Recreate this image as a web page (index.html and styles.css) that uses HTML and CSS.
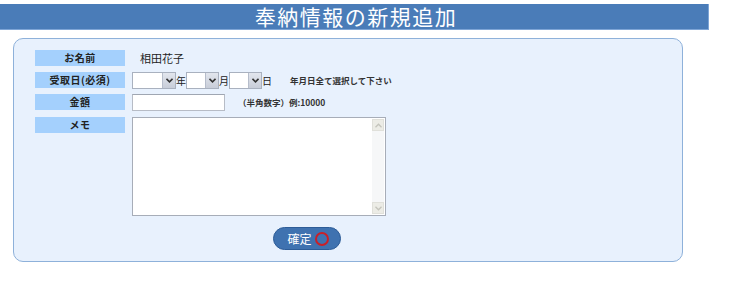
FILE: index.html
```html
<!DOCTYPE html>
<html lang="ja">
<head>
<meta charset="utf-8">
<title>奉納情報の新規追加</title>
<link rel="stylesheet" href="styles.css">
</head>
<body>
<h1 class="title-bar">奉納情報の新規追加</h1>
<form class="panel">
  <div class="row">
    <div class="label">お名前</div>
    <div class="value name">相田花子</div>
  </div>
  <div class="row">
    <div class="label">受取日(必須)</div>
    <div class="value">
      <span class="sel sel-y"><select></select><span class="arrow"><svg width="7" height="5" viewBox="0 0 7 5"><path d="M0.5 0.8 L3.5 3.8 L6.5 0.8" fill="none" stroke="#333" stroke-width="1.6"/></svg></span></span>
      <span class="unit">年</span>
      <span class="sel sel-md"><select></select><span class="arrow"><svg width="7" height="5" viewBox="0 0 7 5"><path d="M0.5 0.8 L3.5 3.8 L6.5 0.8" fill="none" stroke="#333" stroke-width="1.6"/></svg></span></span>
      <span class="unit">月</span>
      <span class="sel sel-md"><select></select><span class="arrow"><svg width="7" height="5" viewBox="0 0 7 5"><path d="M0.5 0.8 L3.5 3.8 L6.5 0.8" fill="none" stroke="#333" stroke-width="1.6"/></svg></span></span>
      <span class="unit">日</span>
      <span class="note note-date">年月日全て選択して下さい</span>
    </div>
  </div>
  <div class="row">
    <div class="label">金額</div>
    <div class="value">
      <input type="text" class="amount">
      <span class="note note-amount">（半角数字）例:10000</span>
    </div>
  </div>
  <div class="row row-memo">
    <div class="label">メモ</div>
    <div class="value">
      <div class="memo-wrap">
        <textarea class="memo"></textarea>
        <div class="scrollbar">
          <span class="sb-btn"><svg width="7" height="5" viewBox="0 0 7 5"><path d="M0.5 4.2 L3.5 1.2 L6.5 4.2" fill="none" stroke="#c4c4bc" stroke-width="1.3"/></svg></span>
          <span class="sb-btn"><svg width="7" height="5" viewBox="0 0 7 5"><path d="M0.5 0.8 L3.5 3.8 L6.5 0.8" fill="none" stroke="#c4c4bc" stroke-width="1.3"/></svg></span>
        </div>
      </div>
    </div>
  </div>
  <div class="actions">
    <button type="button" class="submit">確定<span class="ring"></span></button>
  </div>
</form>
</body>
</html>
```
FILE: styles.css
```css
html, body {
  margin: 0;
  padding: 0;
  background: #ffffff;
  font-family: "Noto Sans CJK JP", "Liberation Sans", sans-serif;
  color: #222;
}

.title-bar {
  margin: 4px 0 0 0;
  width: 709px;
  height: 26px;
  box-sizing: border-box;
  background: #4a7cb8;
  border: 1px solid #7ea5d6;
  border-left: none;
  border-top: none;
  color: #ffffff;
  font-size: 21px;
  font-weight: normal;
  line-height: 25px;
  text-align: center;
  letter-spacing: 1.5px;
  padding-left: 4px;
}

.panel {
  margin: 8px 0 0 13px;
  width: 670px;
  height: 224px;
  box-sizing: border-box;
  background: #e8f1fd;
  border: 1px solid #8eb1da;
  border-radius: 10px;
  padding: 11px 0 0 21px;
  display: flex;
  flex-direction: column;
}

.row {
  display: flex;
  align-items: center;
  height: 16px;
  margin-bottom: 6px;
}

.row-memo {
  align-items: flex-start;
  height: 99px;
  margin-top: 1px;
}

.label {
  width: 90px;
  height: 16px;
  flex: none;
  background: #a4d0fd;
  font-size: 10px;
  font-weight: bold;
  line-height: 16px;
  text-align: center;
  color: #222;
  letter-spacing: 0.5px;
}

.value {
  margin-left: 7px;
  display: flex;
  align-items: center;
}

.name {
  font-size: 11px;
  padding-left: 8px;
  color: #222;
}

.sel {
  position: relative;
  display: inline-block;
  height: 17px;
  box-sizing: border-box;
}

.sel select {
  appearance: none;
  -webkit-appearance: none;
  width: 100%;
  height: 17px;
  margin: 0;
  box-sizing: border-box;
  border: 1px solid #a9b1bf;
  background: #ffffff;
  border-radius: 0;
  display: block;
}

.sel-y { width: 44px; }
.sel-md { width: 33px; }

.arrow {
  position: absolute;
  top: 1px;
  right: 1px;
  width: 13px;
  height: 15px;
  box-sizing: border-box;
  background: linear-gradient(#e2e6ee, #c8cdd8);
  border-left: 1px solid #b6bdcb;
  display: flex;
  align-items: center;
  justify-content: center;
}

.unit {
  font-size: 10px;
  width: 10px;
  text-align: center;
  color: #222;
}

.note {
  font-size: 8.5px;
  font-weight: bold;
  color: #333;
}

.note-date { margin-left: 18px; }

.amount {
  width: 93px;
  height: 17px;
  margin: 0;
  box-sizing: border-box;
  border: 1px solid #b7bcc6;
  border-top-color: #9fa6b2;
  background: #ffffff;
}

.note-amount { margin-left: 13px; }

.memo-wrap {
  position: relative;
  width: 254px;
  height: 99px;
}

.memo {
  display: block;
  width: 254px;
  height: 99px;
  margin: 0;
  box-sizing: border-box;
  border: 1px solid #a7adb8;
  background: #ffffff;
  resize: none;
  overflow: hidden;
}

.scrollbar {
  position: absolute;
  top: 2px;
  right: 2px;
  bottom: 2px;
  width: 12px;
  background: #f6f7f8;
  display: flex;
  flex-direction: column;
  justify-content: space-between;
}

.sb-btn {
  width: 12px;
  height: 12px;
  background: #ecece6;
  border: 1px solid #e0e0da;
  box-sizing: border-box;
  display: flex;
  align-items: center;
  justify-content: center;
}

.actions {
  display: flex;
  justify-content: flex-start;
  padding-left: 238px;
  margin-top: 5px;
}

.submit {
  width: 68px;
  height: 23px;
  box-sizing: border-box;
  background: #3f72b0;
  border: 1px solid #2d5c97;
  border-radius: 12px;
  color: #ffffff;
  font-family: "Noto Sans CJK JP", sans-serif;
  font-size: 12px;
  display: flex;
  align-items: center;
  justify-content: center;
  gap: 3px;
  padding: 0 0 0 2px;
  cursor: pointer;
}

.ring {
  width: 14px;
  height: 14px;
  box-sizing: border-box;
  border: 2.5px solid #c92028;
  border-radius: 50%;
  background: transparent;
}
```
